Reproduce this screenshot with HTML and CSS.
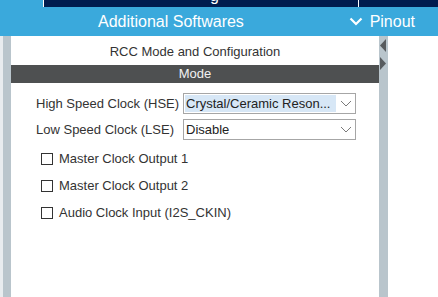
FILE: index.html
```html
<!DOCTYPE html>
<html>
<head>
<meta charset="utf-8">
<link rel="stylesheet" href="styles.css">
</head>
<body>
<div class="topstrip">
  <div class="ts-left"></div>
  <div class="ts-mid"><span class="ts-g">g</span></div>
  <div class="ts-right"></div>
</div>
<div class="bluebar">
  <div class="bb-title">Additional Softwares</div>
  <div class="bb-pinout">
    <svg width="14" height="9" viewBox="0 0 14 9"><path d="M1.5 1.5 L7 7 L12.5 1.5" fill="none" stroke="#fff" stroke-width="2.2"/></svg>
    <span>Pinout</span>
  </div>
</div>
<div class="main">
  <div class="edge-light"></div>
  <div class="edge-gray"></div>
  <div class="panel">
    <div class="panel-title">RCC Mode and Configuration</div>
    <div class="modebar">Mode</div>
    <div class="form">
      <label class="lbl">High Speed Clock (HSE)</label>
      <div class="select">
        <span class="sel-text hl">Crystal/Ceramic Reson...</span>
        <svg class="chev" width="12" height="7" viewBox="0 0 12 7"><path d="M1 1 L6 6 L11 1" fill="none" stroke="#7a7a7a" stroke-width="1"/></svg>
      </div>
      <label class="lbl">Low Speed Clock (LSE)</label>
      <div class="select">
        <span class="sel-text">Disable</span>
        <svg class="chev" width="12" height="7" viewBox="0 0 12 7"><path d="M1 1 L6 6 L11 1" fill="none" stroke="#7a7a7a" stroke-width="1"/></svg>
      </div>
    </div>
    <div class="checks">
      <div class="check"><span class="box"></span><span>Master Clock Output 1</span></div>
      <div class="check"><span class="box"></span><span>Master Clock Output 2</span></div>
      <div class="check"><span class="box"></span><span>Audio Clock Input (I2S_CKIN)</span></div>
    </div>
  </div>
  <div class="splitter">
    <svg width="8" height="34" viewBox="0 0 8 34"><path d="M7 2 L1 8.5 L7 15 Z" fill="#575b5e"/><path d="M1 20 L7 26.5 L1 33 Z" fill="#575b5e"/></svg>
  </div>
  <div class="rest"></div>
</div>
</body>
</html>
```
FILE: styles.css
```css
* { box-sizing: border-box; }
html, body { margin: 0; padding: 0; }
body {
  width: 438px;
  height: 297px;
  overflow: hidden;
  background: #fff;
  font-family: "Liberation Sans", Arial, sans-serif;
  color: #333;
}
.topstrip {
  display: flex;
  height: 7px;
  background: #001c4f;
}
.ts-left { width: 43px; background: #3aa9dc; }
.ts-mid {
  width: 316px;
  border-left: 1px solid #fff;
  border-right: 1px solid #fff;
  position: relative;
  overflow: hidden;
}
.ts-g {
  position: absolute;
  left: 166px;
  top: -12px;
  color: #fff;
  font-size: 16px;
  line-height: 16px;
}
.ts-right { flex: 1; }
.bluebar {
  height: 29px;
  background: #3aa9dc;
  color: #fff;
  display: flex;
  align-items: center;
  font-size: 16px;
}
.bb-title { margin-left: 98px; }
.bb-pinout {
  margin-left: auto;
  margin-right: 23px;
  display: flex;
  align-items: center;
  gap: 7px;
}
.main {
  display: flex;
  height: 261px;
}
.edge-light { width: 3px; background: #e8ecef; }
.edge-gray { width: 8px; background: #b9c5cc; }
.panel {
  width: 368px;
  background: #fff;
  display: flex;
  flex-direction: column;
}
.panel-title {
  font-size: 13px;
  text-align: center;
  padding-top: 8px;
  height: 29px;
  color: #333;
}
.modebar {
  height: 18px;
  background: #4e5051;
  color: #f2f2f2;
  font-size: 13px;
  line-height: 18px;
  text-align: center;
}
.form {
  display: grid;
  grid-template-columns: 141px 173px;
  column-gap: 6px;
  row-gap: 5px;
  align-items: center;
  padding: 10px 0 0 25px;
}
.lbl { font-size: 13px; color: #333; white-space: nowrap; }
.select {
  height: 21px;
  border: 1px solid #a6a6a6;
  display: flex;
  align-items: center;
  padding: 1px;
  background: #fff;
}
.sel-text {
  font-size: 13px;
  color: #222;
  height: 17px;
  line-height: 17px;
  width: 151px;
  padding-left: 1px;
  white-space: nowrap;
  overflow: hidden;
}
.sel-text.hl { background: #d7e7f6; }
.chev { margin-left: 4px; }
.checks {
  display: flex;
  flex-direction: column;
  gap: 14px;
  padding: 12px 0 0 30px;
}
.check {
  display: flex;
  align-items: center;
  gap: 6px;
  font-size: 13px;
  height: 13px;
  color: #333;
}
.box {
  width: 12px;
  height: 12px;
  border: 1px solid #333;
  background: #fff;
}
.splitter {
  width: 9px;
  background: #b9c5cc;
  padding-top: 1px;
  display: flex;
  flex-direction: column;
  align-items: flex-start;
}
.rest { flex: 1; background: #fff; }
```
